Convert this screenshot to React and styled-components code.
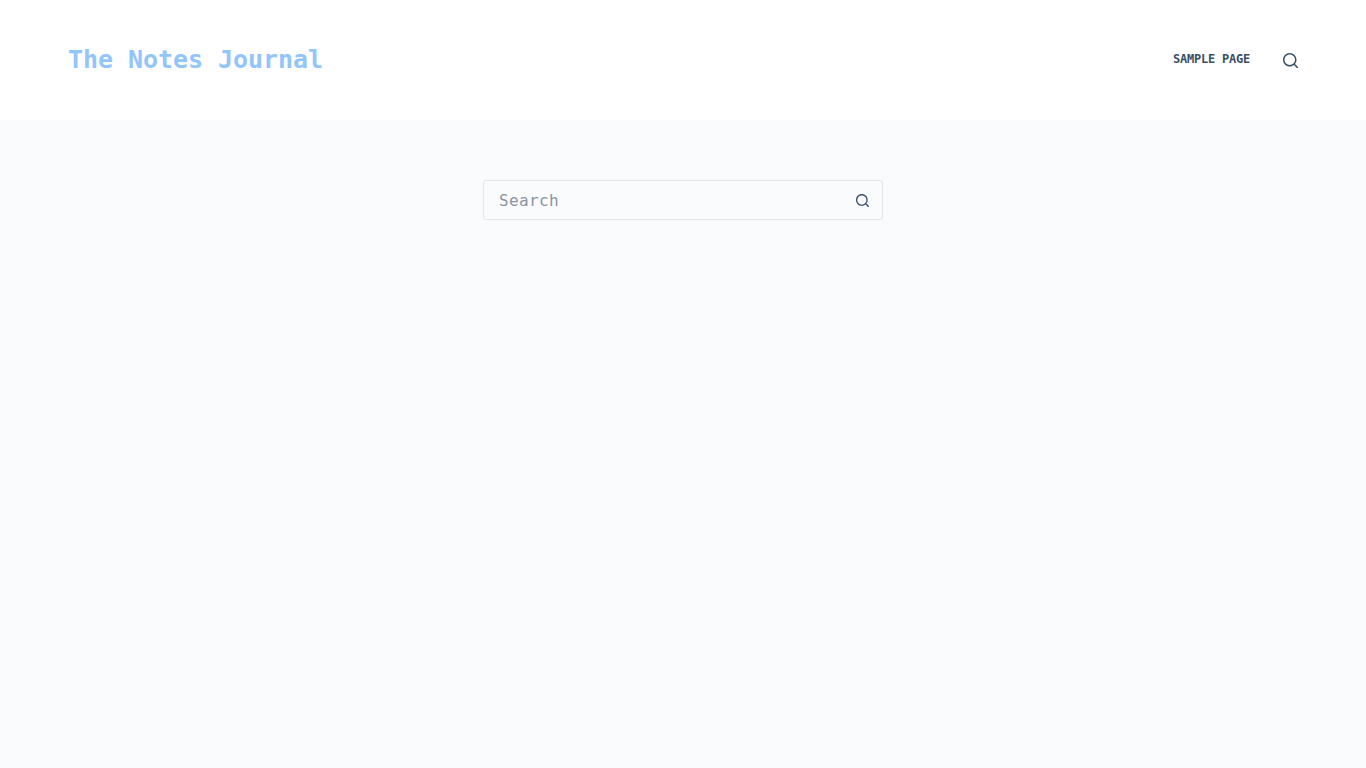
import React from 'react';
import styled, {createGlobalStyle} from "styled-components";

const GlobalStyle = createGlobalStyle`
    html, body {
        margin: 0;
        padding: 0;
    }
    body {
        background: #fafbfc;
        font-family: "DejaVu Sans Mono", monospace;
    }
`;

const SearchIcon = ({size}) => (
    <svg width={size} height={size} viewBox="0 0 15 15" fill="currentColor">
        <path d="M14.8,13.7L12,11c0.9-1.2,1.5-2.6,1.5-4.2c0-3.7-3-6.8-6.8-6.8S0,3,0,6.8s3,6.8,6.8,6.8c1.6,0,3.1-0.6,4.2-1.5l2.8,2.8c0.1,0.1,0.3,0.2,0.5,0.2s0.4-0.1,0.5-0.2C15.1,14.5,15.1,14,14.8,13.7z M1.5,6.8c0-2.9,2.4-5.2,5.2-5.2S12,3.9,12,6.8S9.6,12,6.8,12S1.5,9.6,1.5,6.8z" />
    </svg>
);

export default function App() {
    return (
        <Page>
            <GlobalStyle />
            <Header>
                <SiteTitle>The Notes Journal</SiteTitle>
                <HeaderRight>
                    <NavLink>SAMPLE PAGE</NavLink>
                    <HeaderSearch><SearchIcon size={15} /></HeaderSearch>
                </HeaderRight>
            </Header>
            <Main>
                <SearchBox>
                    <SearchInput placeholder="Search" />
                    <SearchButton><SearchIcon size={13} /></SearchButton>
                </SearchBox>
            </Main>
        </Page>
    );
}

const Page = styled.div`
    min-height: 768px;
    display: flex;
    flex-direction: column;
`;

const Header = styled.header`
    height: 120px;
    background: #fff;
    display: flex;
    align-items: center;
    justify-content: space-between;
    padding: 0 68px;
`;

const SiteTitle = styled.div`
    font-size: 25px;
    line-height: 1.4;
    letter-spacing: -0.05px;
    font-weight: 700;
    color: #93c5fd;
    margin-top: -1px;
`;

const HeaderRight = styled.div`
    display: flex;
    align-items: center;
    gap: 33px;
`;

const NavLink = styled.a`
    font-size: 12px;
    letter-spacing: -0.224px;
    font-weight: 700;
    color: #3a4f66;
    margin-top: -2px;
`;

const HeaderSearch = styled.div`
    display: flex;
    color: #3a4f66;
`;

const Main = styled.main`
    flex: 1;
    display: flex;
    justify-content: center;
    padding-top: 60px;
`;

const SearchBox = styled.form`
    width: 400px;
    height: 40px;
    box-sizing: border-box;
    border: 1px solid #e1e8ed;
    border-radius: 3px;
    display: flex;
    align-items: center;
    padding: 0 13px 0 15px;
`;

const SearchInput = styled.input`
    flex: 1;
    padding: 0;
    border: 0;
    outline: 0;
    background: transparent;
    font-family: "DejaVu Sans Mono", monospace;
    font-size: 16px;
    letter-spacing: 0.368px;
    color: #3a4f66;
    &::placeholder {
        color: #8995a3;
        opacity: 1;
    }
`;

const SearchButton = styled.div`
    display: flex;
    color: #3a4f66;
`;
